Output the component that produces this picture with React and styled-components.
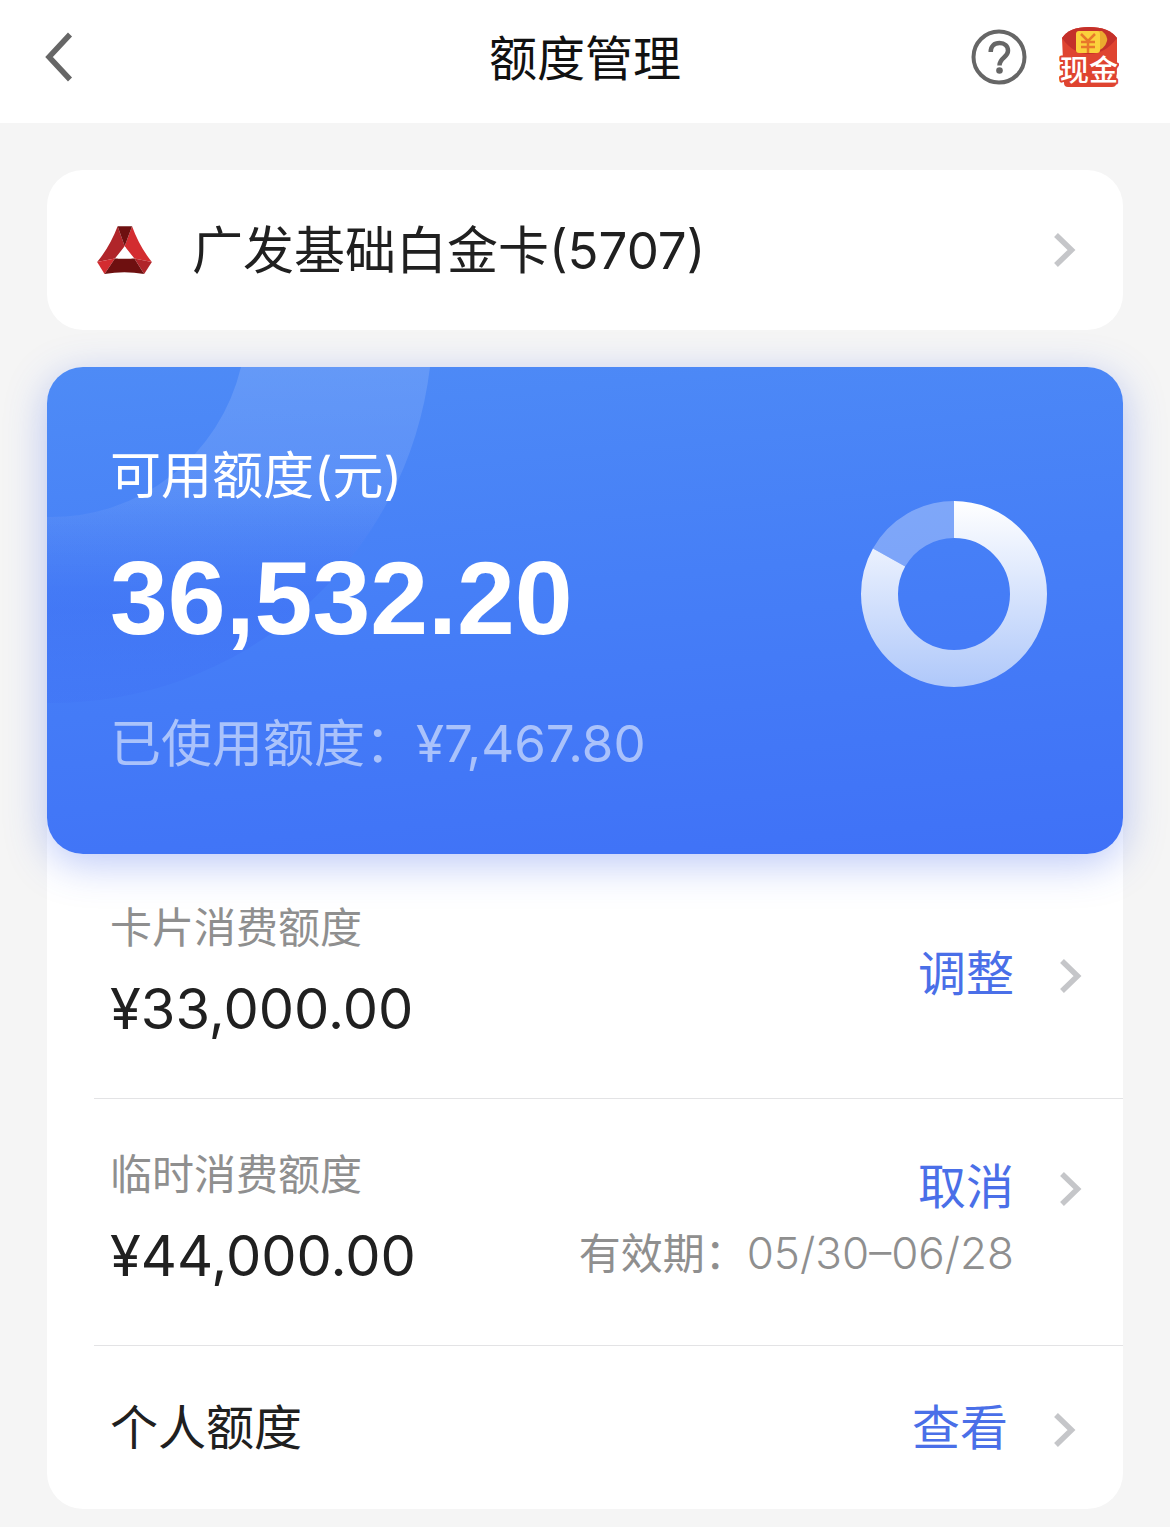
import styled, { createGlobalStyle } from "styled-components";

const cnFonts = `"Noto Sans CJK SC", sans-serif`;

const limits = [
  { label: "卡片消费额度", amount: "¥33,000.00", action: "调整" },
  {
    label: "临时消费额度",
    amount: "¥44,000.00",
    action: "取消",
    note: "有效期：",
    period: "05/30–06/28",
  },
];

const available = 36532.2;
const total = 44000;

const Chevron = () => (
  <ChevronIcon viewBox="0 0 24 36" aria-hidden="true">
    <path d="M3 3 L18.5 18 L3 33" />
  </ChevronIcon>
);

const CardLogo = () => (
  <LogoIcon viewBox="0 0 163 143" aria-hidden="true">
    <path d="M61 1 L82 60 L53 97 L0 107 Q38 62 61 1Z" fill="#b0252a" />
    <path d="M104 1 L82 60 L111 97 L163 107 Q126 62 104 1Z" fill="#d32c30" />
    <path d="M61 1 H104 L82 60Z" fill="#6e1010" />
    <path d="M0 107 L53 97 L22 143Z" fill="#d32c30" />
    <path d="M163 107 L111 97 L140 143Z" fill="#b0252a" />
    <path d="M53 97 H111 L140 143 Q81 132 22 143Z" fill="#6e1010" />
    <path d="M82 60 L103 97 H61Z" fill="#fff" />
  </LogoIcon>
);

const LimitRing = ({ ratio }) => {
  const length = 2 * Math.PI * 74.5;
  return (
    <RingChart viewBox="0 0 186 186" aria-hidden="true">
      <defs>
        {/* The ring is turned by -90deg, so this runs from top to bottom */}
        <linearGradient
          id="ringFill"
          gradientUnits="userSpaceOnUse"
          x1="186"
          y1="0"
          x2="0"
          y2="0"
        >
          <stop offset="0" stopColor="#fff" />
          <stop offset="1" stopColor="#afc8fa" />
        </linearGradient>
      </defs>
      <g transform="rotate(-90 93 93)" fill="none" strokeWidth="37">
        <circle
          cx="93"
          cy="93"
          r="74.5"
          stroke="#fff"
          strokeOpacity="0.3"
          strokeDasharray={`0 ${length * ratio} ${length}`}
        />
        <circle
          cx="93"
          cy="93"
          r="74.5"
          stroke="url(#ringFill)"
          strokeDasharray={`${length * ratio} ${length}`}
        />
      </g>
    </RingChart>
  );
};

const Header = () => (
  <HeaderBar>
    <IconButton type="button" aria-label="Back">
      <svg width="28" height="50" viewBox="0 0 28 50" aria-hidden="true">
        <path
          d="M25 2.5 L4 25 L25 47.5"
          fill="none"
          stroke="#666"
          strokeWidth="5.5"
        />
      </svg>
    </IconButton>
    <Title>额度管理</Title>
    <HeaderActions>
      <IconButton type="button" aria-label="Help">
        <svg width="56" height="56" viewBox="0 0 56 56" aria-hidden="true">
          <circle
            cx="28"
            cy="28"
            r="25.5"
            fill="none"
            stroke="#666"
            strokeWidth="4"
          />
          <path
            d="M19.7 23 C19.7 17 23.3 14 28.5 14 C33.7 14 37 17.2 37 21.8 C37 28.6 28.5 28.6 28.5 36.5"
            fill="none"
            stroke="#666"
            strokeWidth="4.5"
          />
          <circle cx="28.5" cy="41.5" r="3.3" fill="#666" />
        </svg>
      </IconButton>
      <IconButton type="button">
        <svg width="60" height="62" viewBox="0 0 60 62">
          <path
            d="M3 12 Q10 1 30 1 Q50 1 58 12 V40 L57 58 Q57 61 53 61 H9 Q5 61 5 57Z"
            fill="#df4430"
          />
          <path d="M3 12 Q10 1 30 1 Q50 1 58 12 Q46 28 30 28 Q14 28 3 12Z" fill="#c4302a" />
          <path d="M36 5 H43 Q49 10 48 15 Q46 23 36 26Z" fill="#eba92f" />
          <rect x="17" y="5" width="24" height="22" rx="3" fill="#fbd13c" />
          <path
            d="M22 8 L29 15 L36 8 M29 15 V27 M22 16 H36 M22 21 H36"
            fill="none"
            stroke="#e8782a"
            strokeWidth="2.5"
          />
          <BadgeText x="30" y="55" textAnchor="middle">
            现金
          </BadgeText>
        </svg>
      </IconButton>
    </HeaderActions>
  </HeaderBar>
);

const App = () => (
  <>
    <GlobalStyle />
    <Header />
    <Content>
      <CardPicker type="button">
        <CardLogo />
        <CardName>广发基础白金卡(5707)</CardName>
        <Chevron />
      </CardPicker>

      <SummaryCard>
        <SummaryArt viewBox="0 0 384 337" aria-hidden="true">
          <defs>
            <linearGradient
              id="arcLight"
              gradientUnits="userSpaceOnUse"
              x1="0"
              y1="0"
              x2="0"
              y2="337"
            >
              <stop offset="0" stopColor="#fff" stopOpacity="0.13" />
              <stop offset="0.3" stopColor="#fff" stopOpacity="0.1" />
              <stop offset="0.66" stopColor="#fff" stopOpacity="0" />
            </linearGradient>
            <linearGradient
              id="arcShade"
              gradientUnits="userSpaceOnUse"
              x1="0"
              y1="0"
              x2="0"
              y2="337"
            >
              <stop offset="0.4" stopColor="#3a66f2" stopOpacity="0" />
              <stop offset="0.72" stopColor="#3a66f2" stopOpacity="0.3" />
              <stop offset="1" stopColor="#3a66f2" stopOpacity="0.15" />
            </linearGradient>
          </defs>
          <path
            d="M194 0 A195 195 0 0 1 0 150 V336 A381 381 0 0 0 383 0 Z"
            fill="url(#arcLight)"
          />
          <path
            d="M194 0 A195 195 0 0 1 0 150 V336 A381 381 0 0 0 383 0 Z"
            fill="url(#arcShade)"
          />
        </SummaryArt>
        <SummaryText>
          <SummaryLabel>可用额度(元)</SummaryLabel>
          <SummaryAmount>36,532.20</SummaryAmount>
          <SummaryUsed>已使用额度：¥7,467.80</SummaryUsed>
        </SummaryText>
        <LimitRing ratio={available / total} />
      </SummaryCard>

      <LimitPanel>
        {limits.map((each) => (
          <LimitRow key={each.label}>
            <div>
              <LimitLabel>{each.label}</LimitLabel>
              <LimitAmount>{each.amount}</LimitAmount>
            </div>
            <LimitSide>
              <ActionButton type="button">
                {each.action}
                <Chevron />
              </ActionButton>
              {each.note && (
                <LimitNote>
                  {each.note}
                  <Period>{each.period}</Period>
                </LimitNote>
              )}
            </LimitSide>
          </LimitRow>
        ))}
        <PersonalRow>
          <PersonalLabel>个人额度</PersonalLabel>
          <ActionButton type="button">
            查看
            <Chevron />
          </ActionButton>
        </PersonalRow>
      </LimitPanel>
    </Content>
  </>
);

export default App;

// Styled Components
const GlobalStyle = createGlobalStyle`
  * {
    box-sizing: border-box;
  }

  body {
    margin: 0;
    background-color: #f5f5f5;
    color: #202020;
    font-family: Inter, ${cnFonts};
  }

  h1, p {
    margin: 0;
    font-weight: 400;
  }

  button {
    padding: 0;
    border: none;
    background: none;
    font-family: inherit;
    cursor: pointer;
  }

  svg {
    display: block;
    flex-shrink: 0;
  }
`;

const HeaderBar = styled.header`
  display: grid;
  grid-template-columns: 1fr auto 1fr;
  align-items: center;
  height: 123px;
  padding: 0 45px 9px;
  background-color: #fff;
`;

const IconButton = styled.button`
  justify-self: start;
`;

const Title = styled.h1`
  padding-top: 4px;
  color: #111;
  font-size: 48px;
  line-height: 60px;
`;

const HeaderActions = styled.div`
  display: flex;
  align-items: center;
  justify-content: flex-end;
  gap: 32px;
  padding-right: 6px;
`;

const BadgeText = styled.text`
  font-family: ${cnFonts};
  font-size: 29px;
  font-weight: 500;
  fill: #fff;
  stroke: #df4430;
  stroke-width: 4px;
  stroke-linejoin: round;
  paint-order: stroke;
`;

const Content = styled.main`
  padding: 47px 47px 18px;
`;

const CardPicker = styled.button`
  display: flex;
  align-items: center;
  width: 100%;
  height: 160px;
  padding: 0 46px 0 50px;
  border-radius: 36px;
  background-color: #fff;
`;

const LogoIcon = styled.svg`
  width: 55px;
  height: 48px;
`;

const CardName = styled.span`
  flex: 1;
  margin-left: 40px;
  padding-top: 2px;
  color: #202020;
  font-size: 51px;
  line-height: 60px;
  text-align: left;
`;

const ChevronIcon = styled.svg`
  width: 24px;
  height: 36px;
  fill: none;
  stroke: #c5c6c9;
  stroke-width: 5.5;
`;

const SummaryCard = styled.section`
  position: relative;
  z-index: 1;
  display: flex;
  justify-content: space-between;
  margin-top: 37px;
  padding: 79px 76px 80px 63px;
  border-radius: 36px;
  background: linear-gradient(175deg, #4e8bf6 0%, #467ff7 45%, #3f71f7 100%);
  box-shadow: 0 10px 40px rgba(64, 100, 235, 0.35);
  color: #fff;
`;

/* Two soft arcs in the top left corner */
const SummaryArt = styled.svg`
  position: absolute;
  top: 0;
  left: 0;
  width: 384px;
  height: 337px;
`;

const SummaryText = styled.div`
  position: relative;
`;

const SummaryLabel = styled.p`
  font-size: 51px;
  line-height: 60px;
`;

const SummaryAmount = styled.p`
  margin: 32px 0 56px;
  font-family: "Liberation Sans", sans-serif;
  font-size: 104px;
  font-weight: 700;
  line-height: 120px;
`;

const SummaryUsed = styled.p`
  color: rgba(255, 255, 255, 0.55);
  font-size: 51px;
  line-height: 60px;
`;

const RingChart = styled.svg`
  width: 186px;
  height: 186px;
  margin-top: 55px;
`;

const LimitPanel = styled.section`
  margin-top: -36px;
  padding-top: 34px;
  border-radius: 0 0 36px 36px;
  background-color: #fff;
`;

const LimitRow = styled.div`
  display: flex;
  align-items: center;
  justify-content: space-between;
  margin-left: 47px;
  padding: 46px 40px 49px 16px;
  border-bottom: 1px solid #e3e3e5;
`;

const LimitLabel = styled.p`
  margin-bottom: 11px;
  color: #8f8f8f;
  font-size: 42px;
  line-height: 60px;
`;

const LimitAmount = styled.p`
  font-size: 56px;
  line-height: 80px;
`;

const LimitSide = styled.div`
  display: flex;
  flex-direction: column;
  align-items: flex-end;
  gap: 6px;
`;

const ActionButton = styled.button`
  display: flex;
  align-items: center;
  gap: 45px;
  color: #4a6fe8;
  font-size: 48px;
  line-height: 60px;

  ${ChevronIcon} {
    margin-top: 4px;
  }
`;

const LimitNote = styled.p`
  margin-right: 69px;
  color: #8f8f8f;
  font-size: 42px;
  line-height: 60px;
`;

const Period = styled.span`
  font-size: 44px;
  font-weight: 300;
`;

const PersonalRow = styled.div`
  display: flex;
  align-items: center;
  justify-content: space-between;
  height: 163px;
  padding: 0 46px 0 63px;
`;

const PersonalLabel = styled.p`
  font-size: 48px;
  line-height: 60px;
`;
